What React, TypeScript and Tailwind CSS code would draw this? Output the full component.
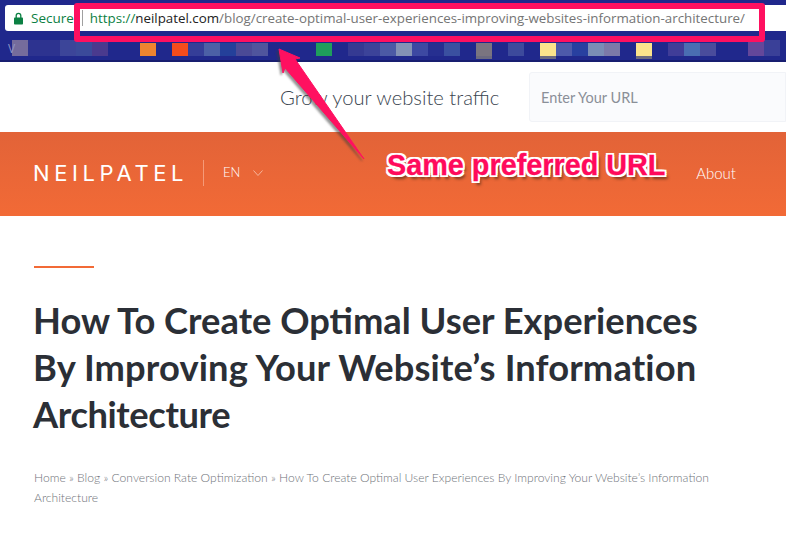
const navy = '#20288c';

const bookmarks = [
  '#756c9c', '#2d3390', '#2d3390', '#3c4599', '#3b4a9a', '#4a3a8e', navy, navy, '#ef8430', navy, '#f54c1c',
  '#353e98', '#4c60a6', '#24409a', '#4b4a96', '#50559d', navy, navy, navy, '#1f9e5c', navy, '#353a92', '#3c4399',
  '#4c5aa5', '#8492b5', '#3d49a2', '#262f90', '#3a50a0', navy, '#7a7480', navy, '#3d4a9c', navy, '#fbe38c',
  '#4d5aaa', '#2840a0', '#7a8db5', '#7c7aa8', navy, '#fbe38c', navy, '#403d98', '#4a6eb2', '#4a4c9c', navy, navy,
  '#64479a', '#3a4098',
];
const tall = [0, 1, 2, 3, 4, 5, 46, 47];
const under = [29, 33, 39];

function Chrome() {
  return (
    <div className="h-[62px] bg-[#20288c] pt-[5px] border-b-2 border-[#181e70]">
      <div className="flex h-[26px] items-center rounded-l-[3px] bg-white ml-[5px] pl-[9px] font-['Open_Sans',sans-serif] text-[13.5px]">
        <svg width="9" height="13" viewBox="0 0 9 13" className="mr-[8px] shrink-0">
          <path d="M2.2 6V3.6a2.3 2.3 0 0 1 4.6 0V6" fill="none" stroke="#0b8043" strokeWidth="1.3" />
          <rect x="0" y="5.5" width="9" height="7" rx="0.8" fill="#0b8043" />
        </svg>
        <span className="text-[#0b8043]">Secure</span>
        <span className="ml-[8px] mr-[7px] h-[16px] w-px bg-[#a0a0a0]" />
        <span className="whitespace-nowrap text-[13.34px]">
          <span className="text-[#0b8043]">https://</span>
          <span className="text-[#222]">neilpatel.com</span>
          <span className="text-[#757575]">/blog/create-optimal-user-experiences-improving-websites-information-architecture/</span>
        </span>
      </div>
      <div className="relative mt-[9px] flex items-start pl-[12px]">
        <span className="absolute left-[8px] top-[2px] font-['Open_Sans',sans-serif] text-[12px] leading-[14px] text-[#8d93c4]">V</span>
        {bookmarks.map((c, i) => (
          <div
            key={i}
            className="w-[16px] border-[#6c6a80]"
            style={{
              backgroundColor: c,
              height: tall.includes(i) ? 16 : 13,
              marginTop: tall.includes(i) ? 0 : 3,
              boxSizing: 'content-box',
              borderBottomWidth: under.includes(i) ? 3 : 0,
            }}
          />
        ))}
      </div>
    </div>
  );
}

function Hero() {
  return (
    <div className="flex h-[70px] items-center bg-white">
      <div className="ml-[280px] w-[249px] text-[20.2px] font-light text-[#3a4550]">Grow your website traffic</div>
      <div className="flex h-[50px] flex-1 items-center rounded-l-[3px] border border-[#f1f3f7] bg-[#fafbfd] pl-[11px] pt-[2px] text-[14.5px] text-[#8a8f98]">
        Enter Your URL
      </div>
    </div>
  );
}

function Nav() {
  return (
    <div className="flex h-[84px] items-center bg-gradient-to-b from-[#e26338] to-[#f26a36] pl-[33px] text-white">
      <div className="mb-[2px] w-[151px] font-['Inter',sans-serif] text-[22px] leading-none font-normal tracking-[4.6px] whitespace-nowrap">NEILPATEL</div>
      <div className="ml-[19px] mb-[2px] h-[26px] w-px bg-[#f59a78]" />
      <span className="ml-[19px] mb-[2px] text-[13px] font-light">EN</span>
      <svg width="10" height="6" viewBox="0 0 10 6" className="ml-[13px] mb-[2px]">
        <path d="M0.5 0.5l4.5 5 4.5-5" fill="none" stroke="#f6b59c" strokeWidth="1" />
      </svg>
      <span className="ml-auto mr-[50px] mb-[2px] text-[15px] font-light">About</span>
    </div>
  );
}

function Article() {
  return (
    <div className="bg-white px-[34px] pt-[50px]">
      <div className="h-[2px] w-[60px] bg-[#f26a36]" />
      <h1 className="mt-[29px] -ml-px text-[36.3px] leading-[47px] font-bold text-[#2b2f36]">
        How To Create Optimal User Experiences
        <br />
        <span className="tracking-[0.13px]">By Improving Your Website’s Information</span>
        <br />
        <span className="tracking-[-0.4px]">Architecture</span>
      </h1>
      <p className="mt-[30px] text-[12.1px] leading-[20px] font-light text-[#70747a]">
        Home » Blog » Conversion Rate Optimization » How To Create Optimal User Experiences By Improving Your Website’s Information Architecture
      </p>
    </div>
  );
}

function Annotations() {
  return (
    <>
      <div className="absolute left-[74px] top-[3px] h-[39px] w-[691px] rounded-[3px] border-[6px] border-[#ff1060]" />
      <svg width="120" height="120" viewBox="0 0 120 120" className="absolute left-[270px] top-[45px] drop-shadow-[-2px_2px_1px_rgba(60,60,60,0.55)]">
        <path d="M9 4L30 13 25 14 94 114 15 23 13 28Z" fill="#ff1060" stroke="#ff1060" strokeWidth="1" strokeLinejoin="round" />
      </svg>
      <div className="absolute left-[387px] top-[148px] text-[28.8px] leading-[34px] font-bold whitespace-nowrap text-[#ff0a5c] font-['Liberation_Sans',sans-serif] [-webkit-text-stroke:0.3px_#ff0a5c] [text-shadow:-2px_-2px_0_#fff,2px_-2px_0_#fff,-2px_2px_0_#fff,2px_2px_0_#fff,0_-2px_0_#fff,0_2px_0_#fff,-2px_0_0_#fff,2px_0_0_#fff,3px_4px_3px_#7a3a20]">
        Same preferred URL
      </div>
    </>
  );
}

export default function App() {
  return (
    <div className="relative h-[534px] w-[786px] overflow-hidden bg-white font-['Lato',sans-serif]">
      <Chrome />
      <Hero />
      <Nav />
      <Article />
      <Annotations />
    </div>
  );
}
